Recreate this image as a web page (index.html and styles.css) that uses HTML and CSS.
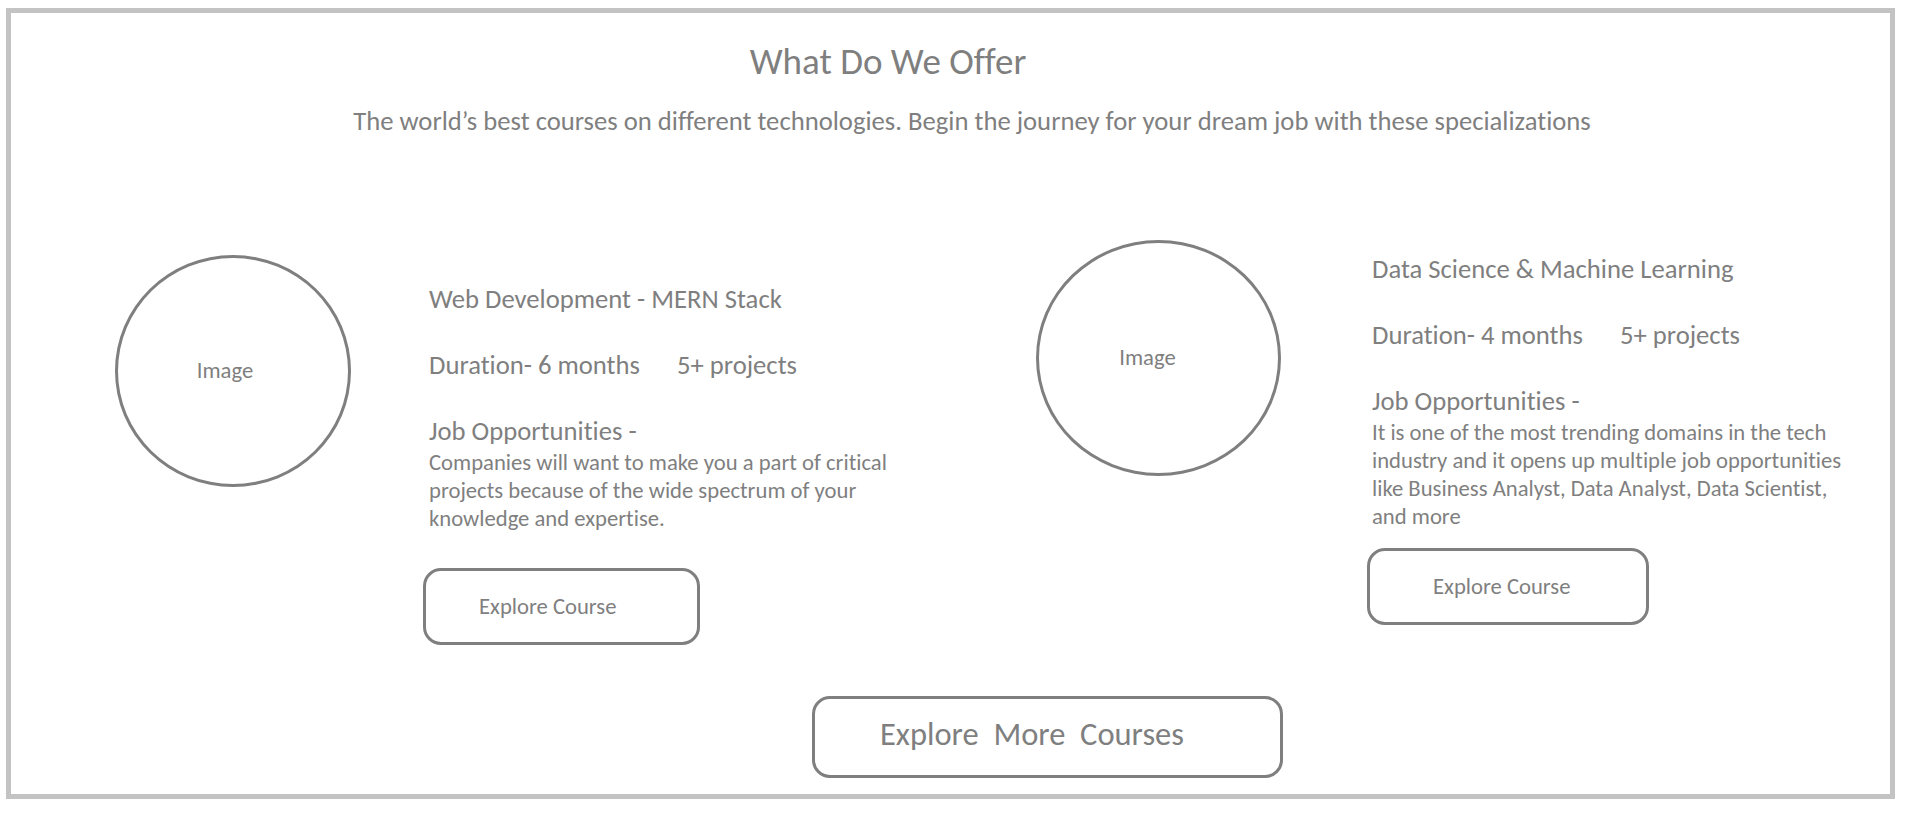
FILE: index.html
```html
<!DOCTYPE html>
<html lang="en">
<head>
<meta charset="utf-8">
<title>What Do We Offer</title>
<link rel="stylesheet" href="styles.css">
</head>
<body>
<main class="frame">
  <header class="intro">
    <h1 class="intro__title">What Do We Offer</h1>
    <p class="intro__lead">The world’s best courses on different technologies. Begin the journey for your dream job with these specializations</p>
  </header>

  <section class="courses">
    <article class="course course--web">
      <div class="course__image">Image</div>
      <div class="course__info">
        <h2 class="course__name">Web Development - MERN Stack</h2>
        <p class="course__meta"><span>Duration- 6 months</span><span class="course__projects">5+ projects</span></p>
        <h3 class="course__jobs">Job Opportunities -</h3>
        <p class="course__desc">Companies will want to make you a part of critical<br>projects because of the wide spectrum of your<br>knowledge and expertise.</p>
        <button class="course__btn" type="button">Explore Course</button>
      </div>
    </article>

    <article class="course course--data">
      <div class="course__image">Image</div>
      <div class="course__info">
        <h2 class="course__name">Data Science &amp; Machine Learning</h2>
        <p class="course__meta"><span>Duration- 4 months</span><span class="course__projects">5+ projects</span></p>
        <h3 class="course__jobs">Job Opportunities -</h3>
        <p class="course__desc">It is one of the most trending domains in the tech<br>industry and it opens up multiple job opportunities<br>like Business Analyst, Data Analyst, Data Scientist,<br>and more</p>
        <button class="course__btn" type="button">Explore Course</button>
      </div>
    </article>
  </section>

  <div class="more">
    <button class="more__btn" type="button">Explore&nbsp; More&nbsp; Courses</button>
  </div>
</main>
</body>
</html>
```

FILE: styles.css
```css
* { box-sizing: border-box; }

html, body {
  margin: 0;
  padding: 0;
  background: #ffffff;
}

body {
  font-family: Carlito, Lato, "Liberation Sans", sans-serif;
  font-variant-ligatures: none;
  color: #7f7f7f;
  width: 1914px;
  height: 822px;
  overflow: hidden;
}

.frame {
  margin: 8px 0 0 6px;
  width: 1889px;
  height: 791px;
  border: 5px solid #c3c3c3;
  display: flex;
  flex-direction: column;
}

/* ---------- header ---------- */
.intro {
  padding-top: 29px;
}

.intro__title {
  margin: 0 0 0 677px;
  width: 400px;
  text-align: center;
  font-size: 37px;
  line-height: 40px;
  font-weight: 400;
}

.intro__lead {
  margin: 23px 0 0 261px;
  width: 1400px;
  text-align: center;
  font-size: 26.67px;
  line-height: 32px;
}

/* ---------- courses ---------- */
.courses {
  margin-top: 103px;
  padding-left: 104px;
  display: grid;
  grid-template-columns: 921px 1fr;
  align-items: start;
}

.course {
  display: flex;
  align-items: flex-start;
}

.course__image {
  flex: none;
  border: 3px solid #7f7f7f;
  border-radius: 50%;
  display: flex;
  align-items: center;
  justify-content: center;
  font-size: 22.67px;
}

.course--web .course__image {
  width: 236px;
  height: 232px;
  margin-top: 15px;
  padding: 0 16px 2px 0;
}

.course--data .course__image {
  width: 245px;
  height: 236px;
  padding: 0 22px 2px 0;
}

.course--web .course__info {
  margin-left: 78px;
  padding-top: 43px;
}

.course--data .course__info {
  margin-left: 91px;
  padding-top: 13px;
}

.course__name,
.course__meta,
.course__jobs {
  margin: 0;
  font-size: 26.67px;
  line-height: 33px;
  font-weight: 400;
}

.course__name,
.course__meta {
  margin-bottom: 33px;
}

.course__meta {
  display: flex;
}

.course__projects {
  margin-left: 37px;
}

.course__desc {
  margin: 0;
  font-size: 22.67px;
  line-height: 28px;
}

.course__btn {
  display: flex;
  align-items: center;
  height: 77px;
  border: 3px solid #7f7f7f;
  border-radius: 18px;
  background: #ffffff;
  color: #7f7f7f;
  font-family: inherit;
  font-variant-ligatures: none;
  font-size: 22.67px;
  text-align: left;
  cursor: pointer;
}

.course--web .course__btn {
  width: 277px;
  margin: 36px 0 0 -6px;
  padding: 0 0 2px 53px;
}

.course--data .course__btn {
  width: 282px;
  margin: 18px 0 0 -5px;
  padding: 0 0 2px 63px;
}

/* ---------- bottom action ---------- */
.more {
  margin-top: 51px;
  padding-left: 801px;
}

.more__btn {
  display: flex;
  align-items: center;
  width: 471px;
  height: 82px;
  padding: 0 0 7px 65px;
  border: 3px solid #7f7f7f;
  border-radius: 18px;
  background: #ffffff;
  color: #7f7f7f;
  font-family: inherit;
  font-variant-ligatures: none;
  font-size: 32.5px;
  cursor: pointer;
}
```
